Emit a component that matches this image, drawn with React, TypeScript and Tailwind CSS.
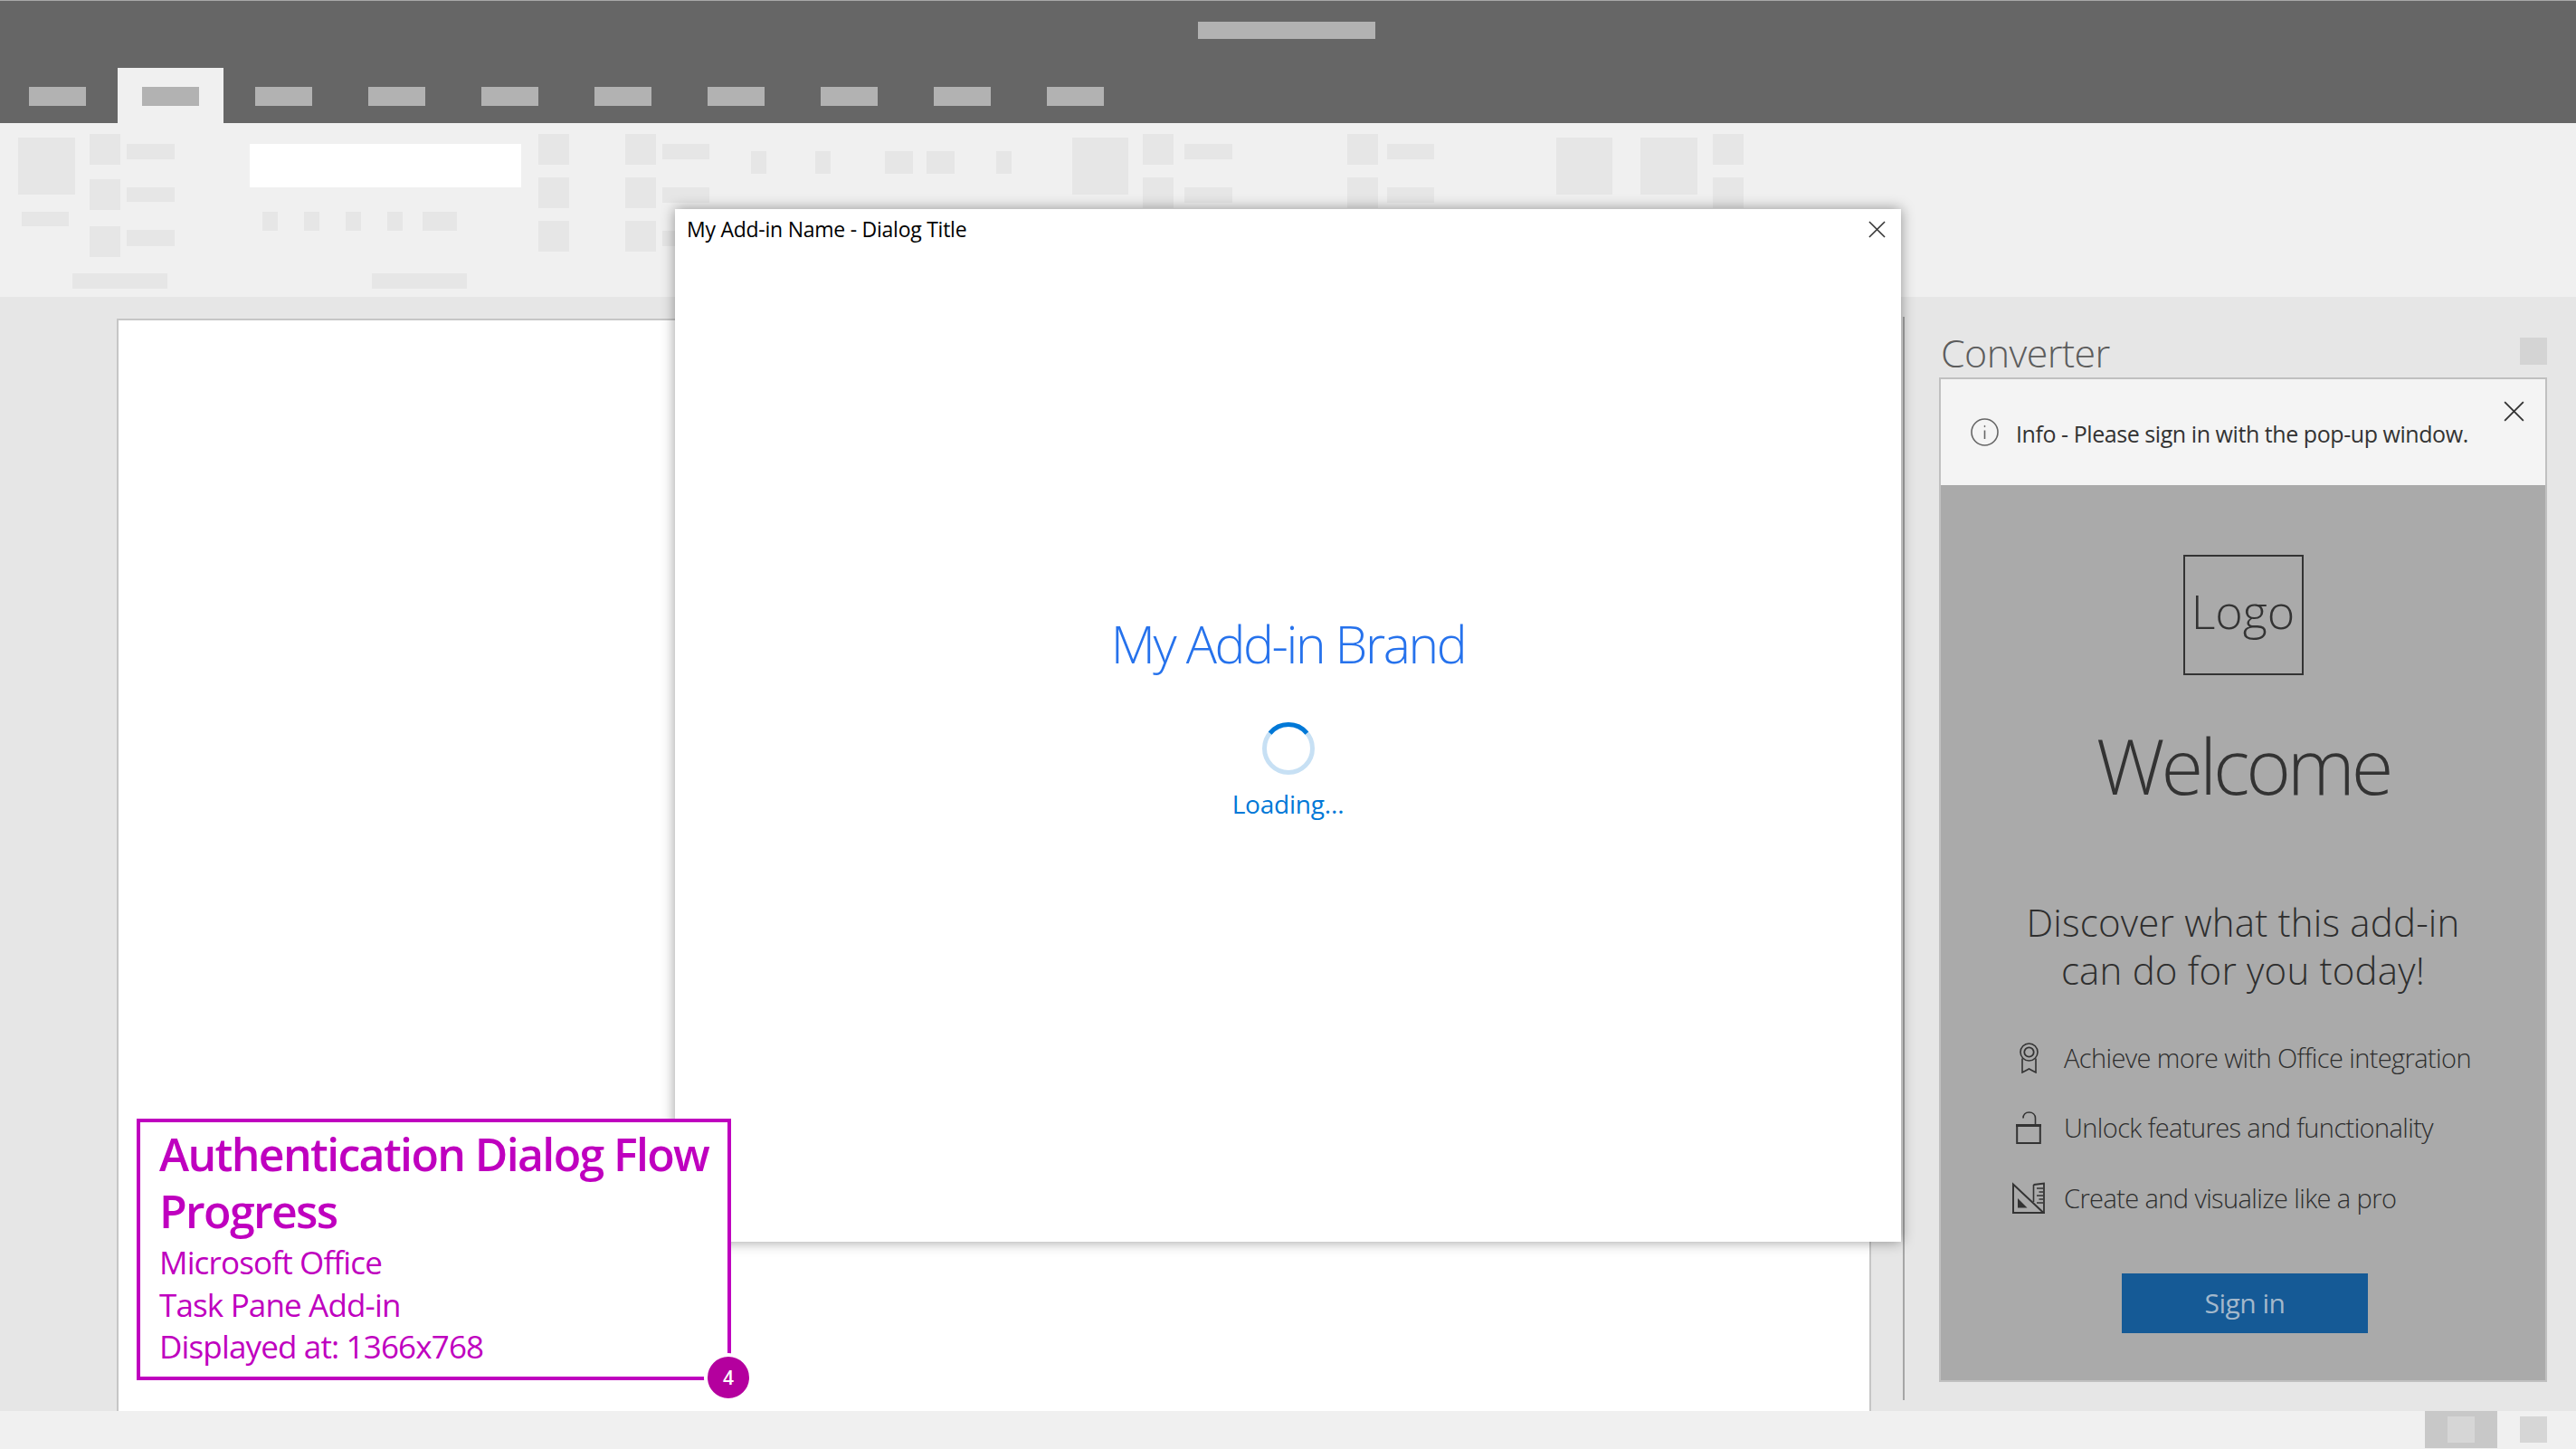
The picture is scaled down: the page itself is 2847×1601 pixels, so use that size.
const light = "font-['Open_Sans',sans-serif] font-light";
const regular = "font-['Open_Sans',sans-serif] font-normal";

const tabs = [0, 1, 2, 3, 4, 5, 6, 7, 8, 9];

// placeholder block in the ribbon
const Blk = ({ className }: { className: string }) => <div className={`bg-[#e6e6e6] shrink-0 ${className}`} />;

// icon + two text stubs, used by the ribbon groups
const TallColumn = ({ count = 3 }: { count?: number }) => (
  <div className="flex flex-col gap-[14px] shrink-0">
    {Array.from({ length: count }).map((_, i) => (
      <Blk key={i} className="w-[34px] h-[34px]" />
    ))}
  </div>
);

const StubColumn = ({ count = 3, width }: { count?: number; width: string }) => (
  <div className={`flex flex-col gap-[31px] pt-[11px] shrink-0 ${width}`}>
    {Array.from({ length: count }).map((_, i) => (
      <Blk key={i} className="w-full h-[17px]" />
    ))}
  </div>
);

const TopBar = () => (
  <div className="h-[136px] bg-[#666666] border-t border-[#a8a8a8] flex flex-col">
    <div className="flex justify-center pt-[23px] pr-[3px] h-[74px]">
      <div className="w-[196px] h-[19px] bg-[#b2b2b2]" />
    </div>
    <div className="flex ml-px">
      {tabs.map((t) => (
        <div key={t} className="w-[125px] h-[61px] flex justify-center">
          <div className={`w-[117px] flex justify-center pt-[21px] ${t === 1 ? "bg-[#f0f0f0]" : ""}`}>
            <div className="w-[63px] h-[21px] bg-[#b2b2b2]" />
          </div>
        </div>
      ))}
    </div>
  </div>
);

const Ribbon = () => (
  <div className="h-[192px] bg-[#f0f0f0] flex pt-[12px] overflow-hidden">
    {/* first group */}
    <div className="ml-[20px] w-[173px] shrink-0 flex flex-col">
      <div className="flex">
        <div className="w-[63px] shrink-0 pt-[4px]">
          <Blk className="w-[63px] h-[63px]" />
          <Blk className="w-[52px] h-[16px] mt-[19px] ml-[4px]" />
        </div>
        <div className="ml-[16px] flex flex-col shrink-0">
          <Blk className="w-[34px] h-[34px]" />
          <Blk className="w-[34px] h-[34px] mt-[16px]" />
          <Blk className="w-[34px] h-[34px] mt-[18px]" />
        </div>
        <div className="ml-[7px] flex flex-col shrink-0">
          <Blk className="w-[53px] h-[17px] mt-[11px]" />
          <Blk className="w-[53px] h-[16px] mt-[31px]" />
          <Blk className="w-[53px] h-[18px] mt-[31px]" />
        </div>
      </div>
      <Blk className="w-[105px] h-[17px] mt-[18px] ml-[60px]" />
    </div>
    {/* font box group */}
    <div className="ml-[83px] w-[300px] shrink-0 flex flex-col pt-[11px]">
      <div className="h-[48px] bg-white" />
      <div className="flex mt-[27px] ml-[14px]">
        <Blk className="w-[17px] h-[21px]" />
        <Blk className="w-[17px] h-[21px] ml-[29px]" />
        <Blk className="w-[17px] h-[21px] ml-[29px]" />
        <Blk className="w-[17px] h-[21px] ml-[29px]" />
        <Blk className="w-[38px] h-[21px] ml-[22px]" />
      </div>
      <Blk className="w-[105px] h-[17px] mt-[47px] ml-[135px]" />
    </div>
    <div className="ml-[19px] shrink-0">
      <TallColumn />
    </div>
    <div className="ml-[62px] shrink-0 flex gap-[7px]">
      <TallColumn />
      <StubColumn width="w-[52px]" />
    </div>
    <div className="ml-[46px] pt-[19px] flex shrink-0">
      <Blk className="w-[17px] h-[25px]" />
      <Blk className="w-[17px] h-[25px] ml-[54px]" />
      <Blk className="w-[31px] h-[25px] ml-[60px]" />
      <Blk className="w-[31px] h-[25px] ml-[15px]" />
      <Blk className="w-[17px] h-[25px] ml-[46px]" />
    </div>
    <div className="ml-[67px] shrink-0 flex">
      <Blk className="w-[62px] h-[63px] mt-[4px]" />
      <div className="ml-[16px]">
        <TallColumn count={2} />
      </div>
      <div className="ml-[12px]">
        <StubColumn count={2} width="w-[53px]" />
      </div>
    </div>
    <div className="ml-[127px] shrink-0 flex gap-[10px]">
      <TallColumn count={2} />
      <StubColumn count={2} width="w-[52px]" />
    </div>
    <div className="ml-[135px] shrink-0 flex">
      <Blk className="w-[62px] h-[63px] mt-[4px]" />
      <Blk className="w-[63px] h-[63px] mt-[4px] ml-[31px]" />
      <div className="ml-[17px]">
        <TallColumn count={2} />
      </div>
    </div>
  </div>
);

const CloseIcon = ({ size, color }: { size: number; color: string }) => (
  <svg width={size} height={size} viewBox="0 0 20 20" fill="none" stroke={color} strokeWidth="1.6">
    <path d="M1 1L19 19M19 1L1 19" />
  </svg>
);

const InfoIcon = () => (
  <svg width="31" height="31" viewBox="0 0 31 31" fill="none" stroke="#666" strokeWidth="1.6" className="shrink-0">
    <circle cx="15.5" cy="15.5" r="14.5" />
    <path d="M15.5 13.5V23" />
    <circle cx="15.5" cy="9" r="0.6" fill="#666" strokeWidth="1" />
  </svg>
);

const MedalIcon = () => (
  <svg width="21" height="34" viewBox="0 0 21 34" fill="none" stroke="#333" strokeWidth="1.6">
    <circle cx="10.5" cy="10.5" r="9.5" />
    <circle cx="10.5" cy="10.5" r="5.2" strokeWidth="1.8" />
    <path d="M3 17.5V33L10.5 29L18 33V17.5" />
  </svg>
);

const LockIcon = () => (
  <svg width="28" height="36" viewBox="0 0 28 36" fill="none" stroke="#333" strokeWidth="2">
    <path d="M8 7.5C8 3.5 10.5 1 14.5 1C18.5 1 21.5 3.5 21.5 7.5V15" strokeWidth="1.6" />
    <rect x="1.2" y="15" width="25.6" height="20" />
    <path d="M0 15.5H28" strokeWidth="3" />
  </svg>
);

const SetSquareIcon = () => (
  <svg width="36" height="35" viewBox="0 0 36 35" fill="none" stroke="#333" strokeWidth="2">
    <path d="M1 2.5V34H34.5Z" />
    <path d="M23.5 3L35 1.5V34" strokeWidth="1.8" />
    <path d="M23.5 3V22" strokeWidth="1.6" />
    <path d="M27 7H34M29.5 11H34M27 15H34M29.5 19H34M27 23H34" strokeWidth="1.4" />
    <path d="M6 18V28.5H16.5Z" fill="#333" stroke="none" />
  </svg>
);

const Spinner = () => (
  <svg width="58" height="58" viewBox="0 0 58 58" fill="none" strokeWidth="5">
    <circle cx="29" cy="29" r="26.5" stroke="#c7e0f4" />
    <path d="M8.6 12.1A26.5 26.5 0 0 1 49.4 12.1" stroke="#0078d7" />
  </svg>
);

const features = [
  { label: "Achieve more with Office integration", icon: <MedalIcon /> },
  { label: "Unlock features and functionality", icon: <LockIcon /> },
  { label: "Create and visualize like a pro", icon: <SetSquareIcon /> },
];

const TaskPane = () => (
  <div className="flex-1 pl-[38px] pr-[32px] flex flex-col">
    <div className="h-[89px] shrink-0 flex justify-between items-start pt-[40px]">
      <span className={`${light} ml-[2px] text-[43px] leading-[44px] -tracking-[0.6px] text-[#5c5c5c]`}>Converter</span>
      <div className="w-[30px] h-[30px] mt-[5px] bg-[#d4d4d4]" />
    </div>
    <div className="w-[672px] h-[1110px] border-2 border-[#c0c0c0] flex flex-col">
      <div className="h-[117px] shrink-0 bg-[#f4f4f4] flex items-start pl-[33px] pr-[23px]">
        <div className="mt-[43px] shrink-0">
          <InfoIcon />
        </div>
        <span className={`${regular} ml-[19px] mt-[42px] text-[25px] leading-[36px] -tracking-[0.44px] text-[#333] whitespace-nowrap`}>
          Info - Please sign in with the pop-up window.
        </span>
        <div className="ml-auto mt-[24px] shrink-0">
          <CloseIcon size={23} color="#333" />
        </div>
      </div>
      <div className="flex-1 bg-[#aaaaaa] flex flex-col items-center">
        <div className="mt-[77px] w-[133px] h-[133px] border-2 border-[#333] flex items-center justify-center pb-[10px]">
          <span className={`${light} text-[52px] leading-[60px] text-[#333]`}>Logo</span>
        </div>
        <div className={`${light} mt-[39px] text-[85px] leading-[120px] -tracking-[4.2px] text-[#333]`}>Welcome</div>
        <div className={`${light} mt-[87px] text-[42px] leading-[53px] tracking-[0.2px] text-[#2e2e2e] text-center`}>
          <div>Discover what this add-in</div>
          <div>can do for you today!</div>
        </div>
        <div className="mt-[32px] w-full flex flex-col">
          {features.map((f) => (
            <div key={f.label} className="h-[77.5px] flex items-center pl-[79px]">
              <div className="w-[36px] flex justify-center shrink-0">{f.icon}</div>
              <span className={`${light} ml-[21px] text-[29px] leading-[40px] -tracking-[0.6px] text-[#2e2e2e] whitespace-nowrap`}>{f.label}</span>
            </div>
          ))}
        </div>
        <div className={`${regular} mt-[44px] ml-[4px] w-[272px] h-[66px] bg-[#155a96] flex items-center justify-center text-[30px] -tracking-[0.5px] text-[#a3b8cb]`}>
          Sign in
        </div>
      </div>
    </div>
  </div>
);

const Dialog = () => (
  <div className="absolute left-[746px] top-[231px] w-[1355px] h-[1141px] bg-white shadow-[0_0_14px_rgba(0,0,0,0.4)] flex flex-col">
    <div className="flex justify-between items-start pl-[13px] pr-[17px]">
      <span className={`${regular} mt-[7px] text-[23px] leading-[30px] -tracking-[0.25px] text-black whitespace-nowrap`}>My Add-in Name - Dialog Title</span>
      <div className="mt-[13px]">
        <CloseIcon size={19} color="#333" />
      </div>
    </div>
    <div className="flex flex-col items-center">
      <div className={`${light} mt-[403px] text-[57px] leading-[80px] -tracking-[2.4px] text-[#2672ec]`}>My Add-in Brand</div>
      <div className="mt-[47px]">
        <Spinner />
      </div>
      <div className={`${regular} mt-[12px] text-[28px] leading-[40px] -tracking-[0.2px] text-[#0078d7]`}>Loading...</div>
    </div>
  </div>
);

const Callout = () => (
  <div className="absolute left-[151px] top-[1236px] w-[657px] h-[289px] bg-white border-4 border-[#bf00bf] pl-[21px] pt-[4px] text-[#bf00bf]">
    <div className={`${regular} !font-semibold text-[50px] leading-[62.5px] -tracking-[1.65px]`}>
      <div className="whitespace-nowrap">Authentication Dialog Flow</div>
      <div>Progress</div>
    </div>
    <div className={`${regular} mt-[3px] text-[35px] leading-[46.5px] -tracking-[0.85px] whitespace-nowrap`}>
      <div>Microsoft Office</div>
      <div>Task Pane Add-in</div>
      <div>Displayed at: 1366x768</div>
    </div>
    <div className={`${regular} !font-semibold absolute -right-[28px] -bottom-[28px] w-[54px] h-[54px] rounded-full bg-[#b4009e] border-4 border-white flex items-center justify-center text-white text-[21px] leading-none`}>
      4
    </div>
  </div>
);

const StatusBar = () => (
  <div className="h-[42px] bg-[#f0f0f0] flex justify-end pr-[32px]">
    <div className="w-[80px] h-[41px] bg-[#c8c8c8] flex justify-center pt-[6px]">
      <div className="w-[30px] h-[29px] bg-[#d6d6d6]" />
    </div>
    <div className="ml-[25px] mt-[6px] w-[30px] h-[29px] bg-[#d6d6d6]" />
  </div>
);

export default function App() {
  return (
    <div className="relative w-[2847px] h-[1601px] overflow-hidden bg-[#e6e6e6]">
      <TopBar />
      <Ribbon />
      <div className="h-[1231px] flex">
        <div className="ml-[129px] mt-[24px] w-[1939px] bg-white border-2 border-b-0 border-[#c6c6c6] shrink-0" />
        <div className="ml-[35px] mt-[22px] w-[2px] h-[1197px] bg-[#a6a6a6] shrink-0" />
        <TaskPane />
      </div>
      <StatusBar />
      <Dialog />
      <Callout />
    </div>
  );
}
